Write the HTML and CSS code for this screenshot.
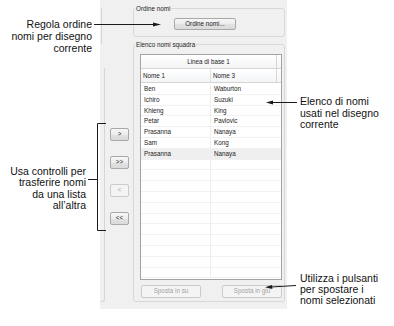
FILE: index.html
```html
<!DOCTYPE html>
<html lang="it">
<head>
<meta charset="utf-8">
<title>Elenco nomi squadra</title>
<link rel="stylesheet" href="styles.css">
</head>
<body>
<div class="stage">
  <div class="dialog">
    <div class="leftedge">
      <div class="edge-top"></div>
      <div class="edge-main"></div>
    </div>
    <div class="btncol">
      <button class="btn mv">&gt;</button>
      <button class="btn mv">&gt;&gt;</button>
      <button class="btn mv off">&lt;</button>
      <button class="btn mv">&lt;&lt;</button>
    </div>
    <div class="groups">
      <fieldset class="grp grp-order">
        <legend>Ordine nomi</legend>
        <button class="btn order">Ordine nomi...</button>
      </fieldset>
      <fieldset class="grp grp-list">
        <legend>Elenco nomi squadra</legend>
        <div class="tbl">
          <div class="hrow">
            <div class="hc hc-wide">Linea di base 1</div>
            <div class="hc hc-end"></div>
          </div>
          <div class="hrow">
            <div class="hc hc-c1">Nome 1</div>
            <div class="hc hc-c2">Nome 3</div>
            <div class="hc hc-end"></div>
          </div>
          <div class="rows">
            <div class="row"><span>Ben</span><span>Waburton</span></div>
            <div class="row"><span>Ichiro</span><span>Suzuki</span></div>
            <div class="row"><span>Khieng</span><span>King</span></div>
            <div class="row"><span>Petar</span><span>Pavlovic</span></div>
            <div class="row"><span>Prasanna</span><span>Nanaya</span></div>
            <div class="row"><span>Sam</span><span>Kong</span></div>
            <div class="row sel"><span>Prasanna</span><span>Nanaya</span></div>
            <div class="row"><span></span><span></span></div>
            <div class="row"><span></span><span></span></div>
            <div class="row"><span></span><span></span></div>
            <div class="row"><span></span><span></span></div>
            <div class="row"><span></span><span></span></div>
            <div class="row"><span></span><span></span></div>
            <div class="row"><span></span><span></span></div>
            <div class="row"><span></span><span></span></div>
            <div class="row"><span></span><span></span></div>
            <div class="row"><span></span><span></span></div>
            <div class="row"><span></span><span></span></div>
          </div>
        </div>
        <div class="bottombtns">
          <button class="btn wide off">Sposta in su</button>
          <button class="btn wide off">Sposta in giù</button>
        </div>
      </fieldset>
    </div>
  </div>

  <div class="note note-order">Regola ordine<br>nomi per disegno<br>corrente</div>
  <div class="note note-list">Elenco di nomi<br>usati nel disegno<br>corrente</div>
  <div class="note note-move">Usa controlli per<br>trasferire nomi<br>da una lista<br>all’altra</div>
  <div class="note note-sort">Utilizza i pulsanti<br>per spostare i<br>nomi selezionati</div>

  <svg class="leaders" width="394" height="326" viewBox="0 0 394 326">
    <g stroke="#1a1a1a" stroke-width="1" fill="none">
      <path d="M94 24.5 H155"/>
      <path d="M297 102.5 H271"/>
      <path d="M106 123.5 H97.5 V230.5 H106"/>
      <path d="M88 179.5 H97.5"/>
      <path d="M296 285.5 L271 287"/>
    </g>
    <g fill="#1a1a1a">
      <path d="M161 24.5 L153 22.5 L153 26.5 Z"/>
      <path d="M266 102.5 L273 100.5 L273 104.5 Z"/>
      <path d="M265 287.2 L272 285 L272.4 289 Z"/>
    </g>
  </svg>
</div>
</body>
</html>
```

FILE: styles.css
```css
html, body {
  margin: 0;
  padding: 0;
  background: #ffffff;
}

.stage {
  position: relative;
  width: 394px;
  height: 326px;
  display: flex;
  align-items: flex-start;
  font-family: "Liberation Sans", Arial, sans-serif;
  color: #1f1f1f;
  overflow: hidden;
}

/* ---------- dialog ---------- */
.dialog {
  margin-left: 100px;
  width: 187px;
  height: 309px;
  background: #f0f0f0;
  display: flex;
  align-items: flex-start;
}

.leftedge {
  width: 6px;
  display: flex;
  flex-direction: column;
  align-items: flex-start;
}
.edge-top {
  margin-top: 8px;
  width: 1px;
  height: 36px;
  border-right: 1px solid #d6d6d6;
}
.edge-main {
  margin-top: 24px;
  width: 4px;
  height: 233px;
  border-right: 1px solid #d6d6d6;
  border-bottom: 1px solid #d6d6d6;
  border-bottom-right-radius: 3px;
}

.btncol {
  width: 27px;
  box-sizing: border-box;
  padding-top: 128px;
  padding-left: 4px;
  display: flex;
  flex-direction: column;
  align-items: flex-start;
  gap: 15px;
}

.btn {
  margin: 0;
  padding: 0;
  box-sizing: border-box;
  border: 1px solid #a9a9a9;
  border-radius: 2px;
  background: linear-gradient(#f7f7f7, #ececec 50%, #e2e2e2 51%, #dadada);
  font-family: "Liberation Sans", Arial, sans-serif;
  font-size: 6.3px;
  line-height: 1;
  color: #222;
}
.btn.off {
  border-color: #cbcbcb;
  background: #f4f4f4;
  color: #a3a3a3;
}

.mv {
  width: 19px;
  height: 13px;
}

.groups {
  width: 152px;
  display: flex;
  flex-direction: column;
}

.grp {
  margin: 0;
  padding: 0;
  min-inline-size: 0;
  border: 1px solid #d8d8d8;
  border-radius: 3px;
  box-sizing: border-box;
}
.grp legend {
  padding: 0 1px;
  margin-left: 1px;
  font-size: 6.3px;
  line-height: 7px;
  color: #222;
}

.grp-order {
  margin-top: 5px;
  height: 32px;
}
.order {
  margin: 4px 0 0 40px;
  width: 62px;
  height: 12px;
}

.grp-list {
  margin-top: 4px;
  height: 261px;
}

/* ---------- table ---------- */
.tbl {
  margin: 6px 2px 0 6px;
  height: 226px;
  box-sizing: border-box;
  border: 1px solid #a3a3a3;
  background: #ffffff;
  display: flex;
  flex-direction: column;
  overflow: hidden;
}

.hrow {
  display: flex;
  height: 14px;
  box-sizing: border-box;
  border-bottom: 1px solid #d5d5d5;
  background: linear-gradient(#ffffff, #f3f4f6);
}
.hc {
  font-size: 6.3px;
  line-height: 13px;
  color: #222;
  white-space: nowrap;
}
.hc-wide {
  flex: 1;
  text-align: center;
}
.hc-c1 {
  width: 70px;
  box-sizing: border-box;
  padding-left: 2px;
  border-right: 1px solid #e2e2e2;
}
.hc-c2 {
  flex: 1;
  padding-left: 2px;
}
.hc-end {
  width: 4px;
  border-left: 1px solid #d5d5d5;
}

.rows {
  flex: 1;
  display: flex;
  flex-direction: column;
  overflow: hidden;
  padding-top: 1px;
}
.row {
  flex: 0 0 10.8px;
  display: grid;
  grid-template-columns: 70px 1fr;
  box-sizing: border-box;
  border-bottom: 1px solid #f1f1f1;
  font-size: 6.3px;
  line-height: 9.8px;
  color: #222;
}
.row span {
  padding-left: 3px;
  white-space: nowrap;
}
.row span:first-child {
  border-right: 1px solid #ededed;
}
.row.sel {
  background: #efefef;
}

.bottombtns {
  margin: 5px 2px 0 7px;
  display: flex;
  justify-content: space-between;
}
.wide {
  width: 60px;
  height: 13px;
}

/* ---------- callouts ---------- */
.note {
  position: absolute;
  font-family: "Liberation Sans", Arial, sans-serif;
  font-size: 10.5px;
  color: #111;
  white-space: nowrap;
}
.note-order {
  right: 302px;
  top: 18px;
  line-height: 12px;
  text-align: right;
}
.note-move {
  right: 308px;
  top: 166px;
  line-height: 11.3px;
  text-align: right;
}
.note-list {
  left: 300px;
  top: 96px;
  line-height: 11.5px;
}
.note-sort {
  left: 300px;
  top: 273px;
  line-height: 11px;
}

.leaders {
  position: absolute;
  left: 0;
  top: 0;
  pointer-events: none;
}
```
